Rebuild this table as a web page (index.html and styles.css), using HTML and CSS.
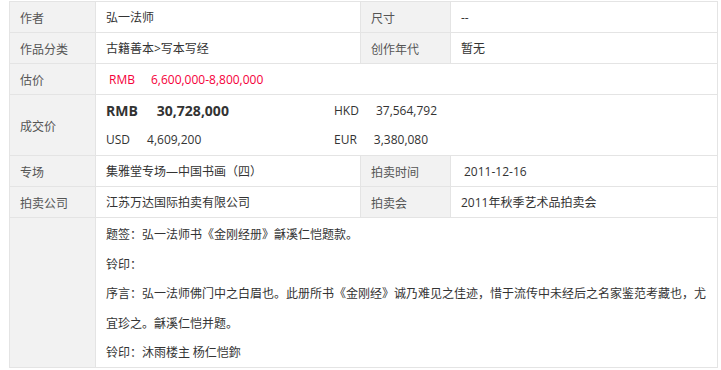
FILE: index.html
```html
<!DOCTYPE html>
<html lang="zh-CN">
<head>
<meta charset="utf-8">
<title>拍品详情</title>
<link rel="stylesheet" href="styles.css">
</head>
<body>
<div class="sheet">
  <div class="lbl">作者</div>
  <div class="val">弘一法师</div>
  <div class="lbl">尺寸</div>
  <div class="val">--</div>

  <div class="lbl">作品分类</div>
  <div class="val">古籍善本&gt;写本写经</div>
  <div class="lbl">创作年代</div>
  <div class="val">暂无</div>

  <div class="lbl">估价</div>
  <div class="val span3 est"><span class="cur">RMB</span><span>6,600,000-8,800,000</span></div>

  <div class="lbl">成交价</div>
  <div class="val span3 deal">
    <div class="pair main"><span class="cur">RMB</span><span>30,728,000</span></div>
    <div class="pair"><span class="cur">HKD</span><span>37,564,792</span></div>
    <div class="pair"><span class="cur">USD</span><span>4,609,200</span></div>
    <div class="pair"><span class="cur">EUR</span><span>3,380,080</span></div>
  </div>

  <div class="lbl">专场</div>
  <div class="val">集雅堂专场—中国书画（四）</div>
  <div class="lbl">拍卖时间</div>
  <div class="val date">2011-12-16</div>

  <div class="lbl">拍卖公司</div>
  <div class="val">江苏万达国际拍卖有限公司</div>
  <div class="lbl">拍卖会</div>
  <div class="val">2011年秋季艺术品拍卖会</div>

  <div class="lbl"></div>
  <div class="val span3 desc">
    <p>题签：弘一法师书《金刚经册》龢溪仁恺题款。</p>
    <p>铃印：</p>
    <p>序言：弘一法师佛门中之白眉也。此册所书《金刚经》诚乃难见之佳迹，惜于流传中未经后之名家鉴范考藏也，尤宜珍之。龢溪仁恺并题。</p>
    <p>铃印：沐雨楼主 杨仁恺鉨</p>
  </div>
</div>
</body>
</html>
```

FILE: styles.css
```css
body {
  margin: 0;
  background: #fff;
  font-family: "Open Sans", "Noto Sans CJK SC", sans-serif;
  font-size: 12px;
  color: #333;
}

.sheet {
  display: grid;
  grid-template-columns: 85px 264px 89px 266px;
  grid-template-rows: 30px 30px 30px 60px 30px 30px 149px;
  gap: 1px;
  padding: 1px;
  width: max-content;
  margin: 1px 0 0 9px;
  background: #e4e4e4;
}

.lbl {
  display: flex;
  align-items: center;
  padding-left: 10px;
  background: #f2f2f2;
  color: #555;
  font-family: "Noto Sans CJK SC", sans-serif;
}

.val {
  display: flex;
  align-items: center;
  padding-left: 10px;
  background: #fff;
  color: #333;
}

.span3 {
  grid-column: span 3;
}

.est {
  padding-left: 13px;
  color: #f5003a;
}

.est .cur {
  margin-right: 16px;
}

.date {
  padding-left: 13px;
}

.deal {
  display: grid;
  grid-template-columns: 228px auto;
  align-content: start;
  align-items: start;
  padding-top: 1px;
  line-height: 29px;
}

.pair {
  display: flex;
}

.pair .cur {
  margin-right: 17px;
}

.pair.main {
  font-weight: bold;
  font-size: 14px;
}

.pair.main .cur {
  margin-right: 19px;
}

.desc {
  display: block;
  padding: 1px 10px 0 10px;
  line-height: 29.5px;
  font-family: "Noto Sans CJK SC", sans-serif;
}

.desc p {
  margin: 0;
}
```
